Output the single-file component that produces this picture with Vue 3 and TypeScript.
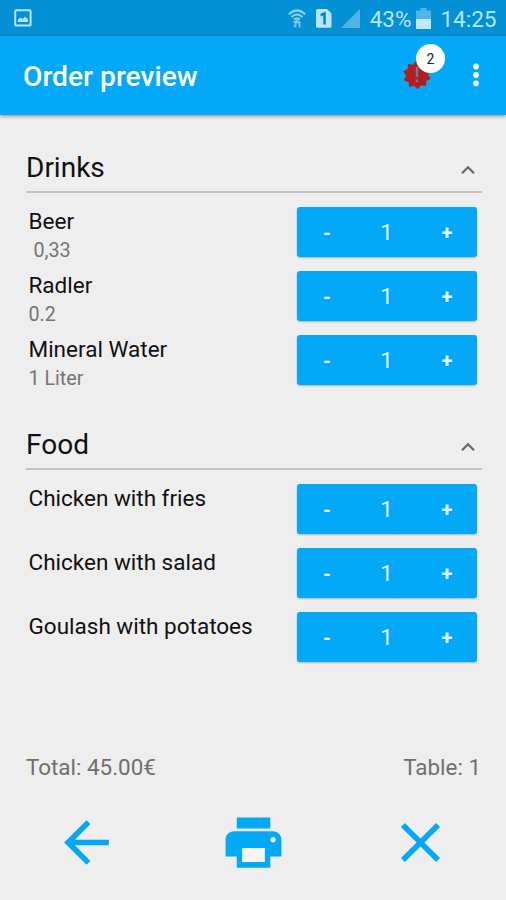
<script setup lang="ts">
import { ref } from 'vue'

interface Item {
  name: string
  detail: string
  qty: number
  indented?: boolean
}
interface Group {
  title: string
  open: boolean
  items: Item[]
}

const groups = ref<Group[]>([
  {
    title: 'Drinks',
    open: true,
    items: [
      { name: 'Beer', detail: '0,33', qty: 1, indented: true },
      { name: 'Radler', detail: '0.2', qty: 1 },
      { name: 'Mineral Water', detail: '1 Liter', qty: 1 },
    ],
  },
  {
    title: 'Food',
    open: true,
    items: [
      { name: 'Chicken with fries', detail: '', qty: 1 },
      { name: 'Chicken with salad', detail: '', qty: 1 },
      { name: 'Goulash with potatoes', detail: '', qty: 1 },
    ],
  },
])

function change(item: Item, by: number) {
  item.qty = Math.max(0, item.qty + by)
}

// Ten-pointed burst around (14, 14)
const burst = Array.from({ length: 20 }, (_, i) => {
  const r = i % 2 ? 11 : 14.3
  const a = (i * Math.PI) / 10 + 0.26
  return `${(14 + r * Math.cos(a)).toFixed(2)},${(14 + r * Math.sin(a)).toFixed(2)}`
}).join(' ')
</script>

<template>
  <div class="screen">
    <div class="status">
      <svg class="shot" width="18" height="18" viewBox="0 0 18 18">
        <rect x="1.2" y="1.2" width="15.4" height="15.4" rx="1.2" fill="none" stroke="#b5e6fb" stroke-width="2" />
        <path d="M4 13V10.5l2.6-2 2 1.6L11 7.6l3 3V13z" fill="#b5e6fb" />
      </svg>
      <div class="indicators">
        <svg class="wifi" width="18" height="19" viewBox="0 0 18 19" fill="none" stroke="#8fd3f2" stroke-width="2">
          <path d="M.8 5.3Q9-2.600 17.2 5.300M3.500 8Q9 2.900 14.500 8M6 10.600Q9 7.800 12 10.600" />
          <path d="M9 9v3M5.500 13.500 9 11.500l3.500 2.500M9 12l-1.500 3v3.500M9.500 13l2 2.500v3M5.500 17h2" stroke-width="1.700" stroke="#7cc9ed" />
        </svg>
        <svg class="sim" width="16" height="19" viewBox="0 0 16 19">
          <path d="M1.500 0H11l4.500 4.500v12.700q0 1.500-1.500 1.500H1.500Q0 18.700 0 17.200V1.500Q0 0 1.500 0z" fill="#b5e6fb" />
          <path d="M4.600 6.300 8.500 4.500v11" stroke="#0a86c4" stroke-width="2.600" fill="none" />
        </svg>
        <svg class="signal" width="19" height="19" viewBox="0 0 19 19">
          <path d="M0 19 19 0v19z" fill="#51b4e3" />
        </svg>
        <span class="percent">43%</span>
        <svg class="battery" width="15" height="21" viewBox="0 0 15 21">
          <path d="M4.500 0h6v2.500H15V21H0V2.500h4.500z" fill="#51b4e3" />
          <path d="M0 11h15v10H0z" fill="#c0eafc" />
        </svg>
        <span class="clock">14:25</span>
      </div>
    </div>

    <header class="appbar">
      <h1>Order preview</h1>
      <button class="alert" aria-label="Alerts">
        <svg width="28" height="28" viewBox="0 0 28 28">
          <polygon :points="burst" fill="#b71c1c" />
          <path d="M14 6v10M14 18.500v2.800" stroke="#5b83ae" stroke-width="2.400" />
        </svg>
        <span class="badge">2</span>
      </button>
      <button class="more" aria-label="More">
        <svg width="8" height="24" viewBox="0 0 8 24" fill="#fff">
          <circle cx="4" cy="3.500" r="2.900" />
          <circle cx="4" cy="12" r="2.900" />
          <circle cx="4" cy="20.300" r="2.900" />
        </svg>
      </button>
    </header>

    <main>
      <section v-for="group in groups" :key="group.title">
        <div class="heading" @click="group.open = !group.open">
          <h2>{{ group.title }}</h2>
          <svg width="14" height="10" viewBox="0 0 14 10">
            <path d="M1 8.300 7 2.300l6 6" fill="none" stroke="#666" stroke-width="2.200" />
          </svg>
        </div>
        <div v-if="group.open" class="items">
          <div v-for="item in group.items" :key="item.name" class="item">
            <div class="label">
              <div class="name">{{ item.name }}</div>
              <div class="detail" :class="{ indented: item.indented }">{{ item.detail }}</div>
            </div>
            <div class="stepper">
              <button @click="change(item, -1)">-</button>
              <span>{{ item.qty }}</span>
              <button @click="change(item, 1)">+</button>
            </div>
          </div>
        </div>
      </section>
    </main>

    <div class="summary">
      <span>Total: 45.00€</span>
      <span>Table: 1</span>
    </div>

    <footer>
      <button aria-label="Back">
        <svg viewBox="0 0 24 24"><path d="M20 11H7.830l5.590-5.590L12 4l-8 8 8 8 1.410-1.410L7.830 13H20v-2z" /></svg>
      </button>
      <button aria-label="Print">
        <svg viewBox="0 0 24 24">
          <path d="M19 8H5c-1.660 0-3 1.340-3 3v6h4v4h12v-4h4v-6c0-1.660-1.340-3-3-3zm-3 11H8v-5h8v5zm3-7c-.55 0-1-.45-1-1s.45-1 1-1 1 .45 1 1-.45 1-1 1zm-1-9H6v4h12V3z" />
          <path class="paper" d="M8 14h8v5H8z" />
        </svg>
      </button>
      <button aria-label="Cancel">
        <svg viewBox="0 0 24 24"><path d="M19 6.410 17.590 5 12 10.590 6.410 5 5 6.410 10.590 12 5 17.590 6.410 19 12 13.410 17.590 19 19 17.590 13.410 12z" /></svg>
      </button>
    </footer>
  </div>
</template>

<style>
body {
  margin: 0;
  background: #eee;
}
</style>

<style scoped>
.screen {
  display: flex;
  flex-direction: column;
  width: 506px;
  height: 900px;
  background: #eee;
  font-family: Roboto, 'Liberation Sans', sans-serif;
  overflow: hidden;
}
button {
  display: flex;
  align-items: center;
  justify-content: center;
  padding: 0;
  border: 0;
  background: none;
  font: inherit;
  color: inherit;
}
svg {
  display: block;
  flex: none;
}
.status {
  display: flex;
  justify-content: space-between;
  align-items: center;
  box-sizing: border-box;
  height: 36px;
  padding: 0 9.500px 0 13.500px;
  background: #0490d4;
  color: #b5e6fb;
  font-size: 22.500px;
  line-height: 36px;
}
.indicators {
  display: flex;
  align-items: center;
}
.sim {
  margin-left: 10px;
}
.signal {
  margin-left: 9.500px;
}
.percent {
  margin-left: 9.500px;
  padding-top: 1px;
}
.battery {
  margin-left: 5px;
}
.clock {
  margin-left: 9px;
  padding-top: 1px;
}
.appbar {
  display: flex;
  align-items: center;
  box-sizing: border-box;
  height: 78.500px;
  padding: 0 26px 0 23px;
  background: #03a9f7;
  box-shadow: 0 1px 4px rgba(0, 0, 0, 0.45);
  color: #fff;
}
h1 {
  flex: 1;
  margin: 3px 0 0;
  font-size: 28.200px;
  line-height: 34px;
  font-weight: 500;
}
.alert {
  position: relative;
  margin-right: 41px;
}
.badge {
  position: absolute;
  left: 13px;
  top: -17px;
  width: 29px;
  height: 29px;
  border-radius: 50%;
  background: #fff;
  color: #222;
  font-size: 14px;
  line-height: 30px;
  text-align: center;
}
main {
  flex: 1;
  padding: 28px 24px 0 26px;
}
section {
  height: 277px;
}
.heading {
  display: flex;
  justify-content: space-between;
  align-items: center;
  box-sizing: border-box;
  height: 50.500px;
  padding: 3px 7.500px 0 0;
  border-bottom: 2px solid #c2c2c2;
}
.heading svg {
  margin-top: 3px;
}
h2 {
  margin: 0;
  font-size: 28px;
  font-weight: 400;
  line-height: 34px;
  color: #111;
}
.items {
  display: flex;
  flex-direction: column;
  gap: 13.500px;
  padding: 13.500px 5px 0 2.500px;
}
.item {
  display: flex;
  justify-content: space-between;
  height: 50.500px;
}
.name {
  font-size: 22.500px;
  line-height: 28px;
  color: #111;
}
.detail {
  margin-top: 3px;
  font-size: 19.700px;
  line-height: 26px;
  color: #757575;
}
.detail.indented {
  padding-left: 5px;
}
.stepper {
  display: grid;
  grid-template-columns: 1fr 1fr 1fr;
  width: 180px;
  height: 50.500px;
  border-radius: 3px;
  background: #03a9f7;
  box-shadow: 0 1px 2px rgba(0, 0, 0, 0.25);
  color: #e9f8ff;
  font-size: 22.500px;
  line-height: 51px;
  text-align: center;
}
.stepper span {
  padding-right: 1px;
}
.stepper button {
  padding-top: 1px;
  font-size: 20px;
  font-weight: 700;
}
.summary {
  display: flex;
  justify-content: space-between;
  padding: 0 25px 0 26px;
  height: 56px;
  font-size: 22.400px;
  line-height: 28px;
  color: #6f6f6f;
}
footer {
  display: grid;
  grid-template-columns: repeat(3, 167px);
  height: 91.500px;
  padding: 0.500px 0 0 3px;
  box-sizing: border-box;
}
footer svg {
  width: 67px;
  height: 67px;
  fill: #03a9f4;
}
footer button {
  height: 67px;
}
.paper {
  fill: #f6f6f6;
}
</style>
